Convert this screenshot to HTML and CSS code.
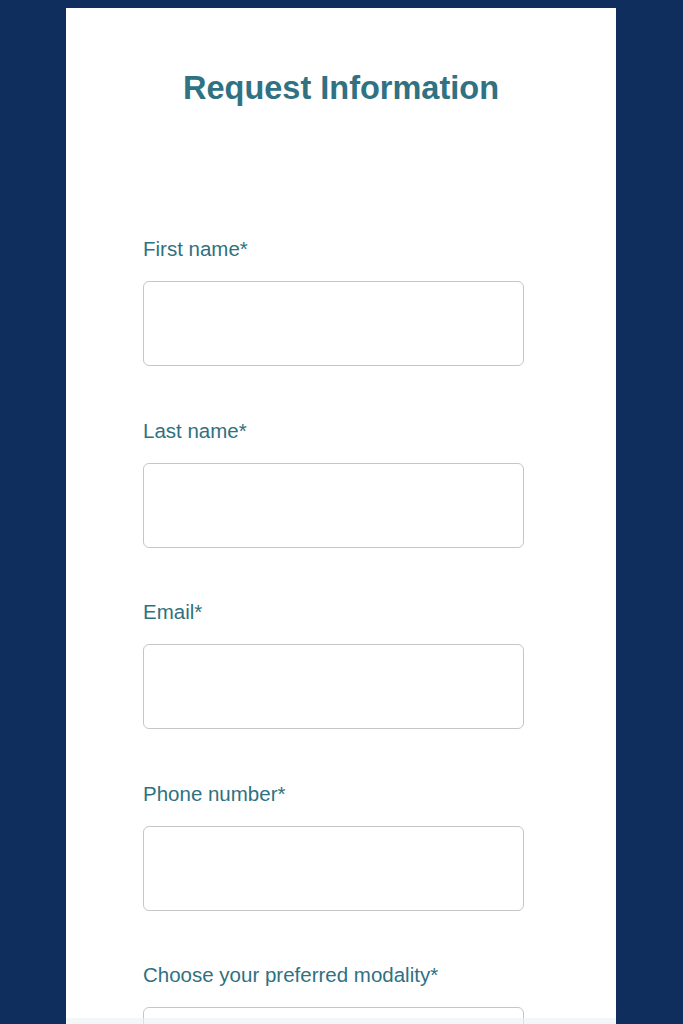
FILE: index.html
```html
<!DOCTYPE html>
<html lang="en">
<head>
    <meta charset="UTF-8">
    <meta name="viewport" content="width=device-width, initial-scale=1.0">
    <title>Request Information</title>
    <link rel="stylesheet" href="styles.css">
</head>
<body>
    <div class="card">
        <h1 class="title">Request Information</h1>
        <form class="form">
            <label class="field">
                <span class="field-label">First name*</span>
                <input type="text" class="field-input">
            </label>
            <label class="field">
                <span class="field-label">Last name*</span>
                <input type="text" class="field-input">
            </label>
            <label class="field">
                <span class="field-label">Email*</span>
                <input type="email" class="field-input">
            </label>
            <label class="field">
                <span class="field-label">Phone number*</span>
                <input type="tel" class="field-input">
            </label>
            <label class="field">
                <span class="field-label">Choose your preferred modality*</span>
                <input type="text" class="field-input">
            </label>
        </form>
    </div>
    <!-- bottom strip that sits over the form -->
    <div class="bottom-strip"></div>
</body>
</html>
```

FILE: styles.css
```css
*{
    padding: 0;
    margin: 0;
    box-sizing: border-box;
}
html,body{
    background-color: #0f2d5d;
}
body{
    font-family: "Liberation Sans", Arial, Helvetica, sans-serif;
    height: 1024px;
    overflow: hidden;
    padding-right: 1px;
}
.card{
    width: 550px;
    margin: 8px auto 0;
    background-color: #fff;
    padding: 62px 0 40px;
}
.title{
    text-align: center;
    font-size: 32.5px;
    line-height: 37px;
    font-weight: bold;
    color: #307282;
    margin-bottom: 130px;
}
.form{
    width: 381px;
    margin-left: 77px;
}
.field{
    display: block;
}
.field-label{
    display: block;
    font-size: 20.5px;
    line-height: 24px;
    color: #2f7181;
    margin-bottom: 20px;
}
.field-input{
    display: block;
    width: 100%;
    height: 85px;
    border: 1.5px solid #c6c6c6;
    border-radius: 6px;
    background: transparent;
    margin-bottom: 52.5px;
    outline: none;
}
.bottom-strip{
    position: fixed;
    left: 50%;
    bottom: 0;
    width: 550px;
    margin-left: -275.5px;
    height: 6px;
    background-color: rgba(235, 242, 244, .6);
}
```
